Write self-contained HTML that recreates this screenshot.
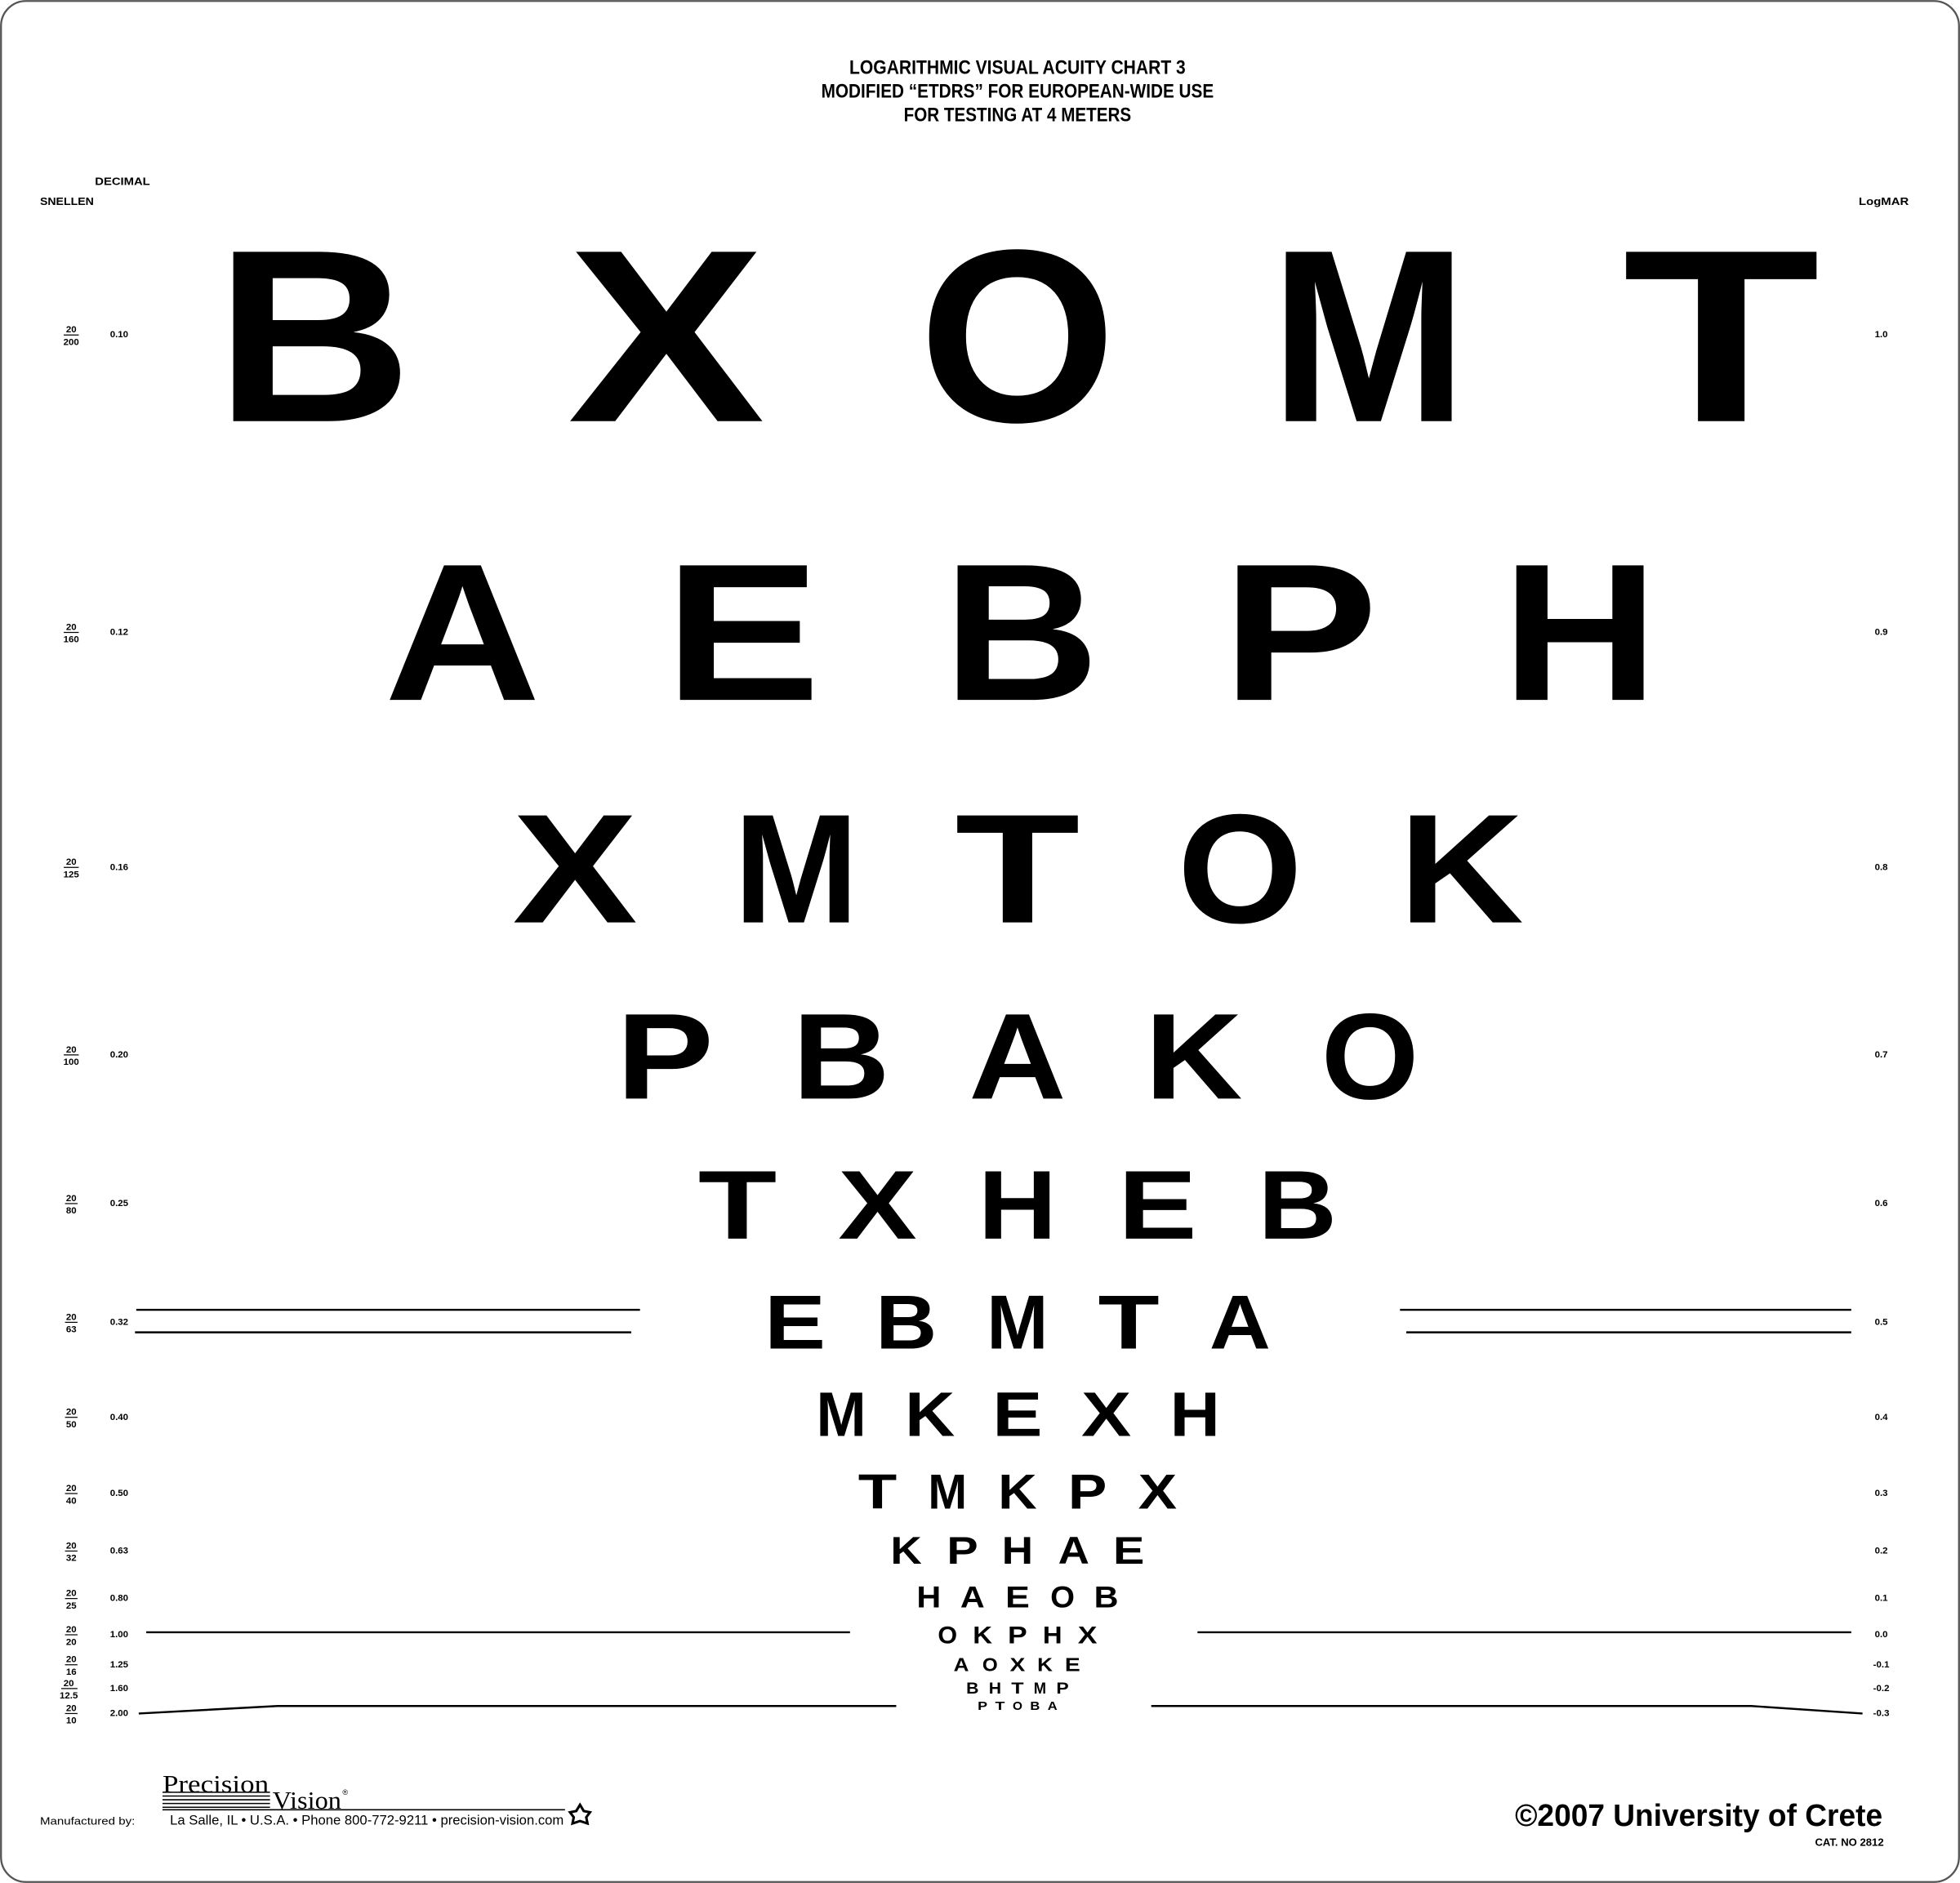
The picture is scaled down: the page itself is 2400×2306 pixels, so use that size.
<!DOCTYPE html>
<html><head><meta charset="utf-8"><style>
html,body{margin:0;padding:0;background:#fff;}
svg{display:block;}
.L{font-family:"Liberation Sans",sans-serif;font-weight:bold;text-anchor:middle;fill:#000;}
.s{font-family:"Liberation Sans Narrow","Liberation Sans",sans-serif;font-weight:bold;fill:#000;font-size:8.5px;}
.m{text-anchor:middle;}
.h{font-family:"Liberation Sans Narrow","Liberation Sans",sans-serif;font-weight:bold;fill:#000;text-anchor:middle;}
</style></head><body>
<svg width="2400" height="2306" viewBox="0 0 1568 1506.6" preserveAspectRatio="none" xmlns="http://www.w3.org/2000/svg">
<rect x="0.8" y="0.8" width="1566.4" height="1505" rx="20" ry="20" fill="#fff" stroke="#555" stroke-width="1.5"/>
<text class="h" x="814" y="59" font-size="16" textLength="269" lengthAdjust="spacingAndGlyphs">LOGARITHMIC VISUAL ACUITY CHART  3</text>
<text class="h" x="814" y="78" font-size="16" textLength="314" lengthAdjust="spacingAndGlyphs">MODIFIED “ETDRS” FOR EUROPEAN-WIDE USE</text>
<text class="h" x="814" y="97" font-size="16" textLength="182" lengthAdjust="spacingAndGlyphs">FOR TESTING AT 4 METERS</text>
<text class="s" x="76" y="148" font-size="11.5" textLength="44" lengthAdjust="spacingAndGlyphs">DECIMAL</text>
<text class="s" x="32" y="164" font-size="11.5" textLength="43" lengthAdjust="spacingAndGlyphs">SNELLEN</text>
<text class="s" x="1487" y="164" font-size="11.5" textLength="40" lengthAdjust="spacingAndGlyphs">LogMAR</text>

<g class="L" font-size="197" lengthAdjust="spacingAndGlyphs">
<text x="251" y="337" textLength="158" lengthAdjust="spacingAndGlyphs">B</text><text x="533" y="337" textLength="158" lengthAdjust="spacingAndGlyphs">X</text><text x="814" y="337" textLength="158" lengthAdjust="spacingAndGlyphs">O</text><text x="1095" y="337" textLength="158" lengthAdjust="spacingAndGlyphs">M</text><text x="1377" y="337" textLength="158" lengthAdjust="spacingAndGlyphs">T</text></g>
<g class="L" font-size="156.4">
<text x="370" y="560" textLength="125" lengthAdjust="spacingAndGlyphs">A</text><text x="594" y="560" textLength="125" lengthAdjust="spacingAndGlyphs">E</text><text x="817" y="560" textLength="125" lengthAdjust="spacingAndGlyphs">B</text><text x="1040" y="560" textLength="125" lengthAdjust="spacingAndGlyphs">P</text><text x="1264" y="560" textLength="125" lengthAdjust="spacingAndGlyphs">H</text></g>
<g class="L" font-size="124.3">
<text x="460" y="738" textLength="100" lengthAdjust="spacingAndGlyphs">X</text><text x="637" y="738" textLength="100" lengthAdjust="spacingAndGlyphs">M</text><text x="814" y="738" textLength="100" lengthAdjust="spacingAndGlyphs">T</text><text x="992" y="738" textLength="100" lengthAdjust="spacingAndGlyphs">O</text><text x="1169" y="738" textLength="100" lengthAdjust="spacingAndGlyphs">K</text></g>
<g class="L" font-size="97.8">
<text x="532" y="879" textLength="78" lengthAdjust="spacingAndGlyphs">P</text><text x="673" y="879" textLength="78" lengthAdjust="spacingAndGlyphs">B</text><text x="814" y="879" textLength="78" lengthAdjust="spacingAndGlyphs">A</text><text x="955" y="879" textLength="78" lengthAdjust="spacingAndGlyphs">K</text><text x="1096" y="879" textLength="78" lengthAdjust="spacingAndGlyphs">O</text></g>
<g class="L" font-size="78.2">
<text x="590" y="991" textLength="63" lengthAdjust="spacingAndGlyphs">T</text><text x="702" y="991" textLength="63" lengthAdjust="spacingAndGlyphs">X</text><text x="814" y="991" textLength="63" lengthAdjust="spacingAndGlyphs">H</text><text x="926" y="991" textLength="63" lengthAdjust="spacingAndGlyphs">E</text><text x="1038" y="991" textLength="63" lengthAdjust="spacingAndGlyphs">B</text></g>
<g class="L" font-size="61.5">
<text x="636" y="1079" textLength="49" lengthAdjust="spacingAndGlyphs">E</text><text x="725" y="1079" textLength="49" lengthAdjust="spacingAndGlyphs">B</text><text x="814" y="1079" textLength="49" lengthAdjust="spacingAndGlyphs">M</text><text x="903" y="1079" textLength="49" lengthAdjust="spacingAndGlyphs">T</text><text x="992" y="1079" textLength="49" lengthAdjust="spacingAndGlyphs">A</text></g>
<g class="L" font-size="50.3">
<text x="673" y="1149" textLength="40" lengthAdjust="spacingAndGlyphs">M</text><text x="744" y="1149" textLength="40" lengthAdjust="spacingAndGlyphs">K</text><text x="814" y="1149" textLength="40" lengthAdjust="spacingAndGlyphs">E</text><text x="885" y="1149" textLength="40" lengthAdjust="spacingAndGlyphs">X</text><text x="956" y="1149" textLength="40" lengthAdjust="spacingAndGlyphs">H</text></g>
<g class="L" font-size="39.1">
<text x="702" y="1207" textLength="31" lengthAdjust="spacingAndGlyphs">T</text><text x="758" y="1207" textLength="31" lengthAdjust="spacingAndGlyphs">M</text><text x="814" y="1207" textLength="31" lengthAdjust="spacingAndGlyphs">K</text><text x="870" y="1207" textLength="31" lengthAdjust="spacingAndGlyphs">P</text><text x="926" y="1207" textLength="31" lengthAdjust="spacingAndGlyphs">X</text></g>
<g class="L" font-size="30.7">
<text x="725" y="1251" textLength="25" lengthAdjust="spacingAndGlyphs">K</text><text x="770" y="1251" textLength="25" lengthAdjust="spacingAndGlyphs">P</text><text x="814" y="1251" textLength="25" lengthAdjust="spacingAndGlyphs">H</text><text x="859" y="1251" textLength="25" lengthAdjust="spacingAndGlyphs">A</text><text x="903" y="1251" textLength="25" lengthAdjust="spacingAndGlyphs">E</text></g>
<g class="L" font-size="24.4">
<text x="743" y="1286" textLength="19.5" lengthAdjust="spacingAndGlyphs">H</text><text x="778" y="1286" textLength="19.5" lengthAdjust="spacingAndGlyphs">A</text><text x="814" y="1286" textLength="19.5" lengthAdjust="spacingAndGlyphs">E</text><text x="850" y="1286" textLength="19.5" lengthAdjust="spacingAndGlyphs">O</text><text x="885" y="1286" textLength="19.5" lengthAdjust="spacingAndGlyphs">B</text></g>
<g class="L" font-size="19.6">
<text x="758" y="1315" textLength="15.5" lengthAdjust="spacingAndGlyphs">O</text><text x="786" y="1315" textLength="15.5" lengthAdjust="spacingAndGlyphs">K</text><text x="814" y="1315" textLength="15.5" lengthAdjust="spacingAndGlyphs">P</text><text x="842" y="1315" textLength="15.5" lengthAdjust="spacingAndGlyphs">H</text><text x="870" y="1315" textLength="15.5" lengthAdjust="spacingAndGlyphs">X</text></g>
<g class="L" font-size="15.4">
<text x="769" y="1337" textLength="12.3" lengthAdjust="spacingAndGlyphs">A</text><text x="792" y="1337" textLength="12.3" lengthAdjust="spacingAndGlyphs">O</text><text x="814" y="1337" textLength="12.3" lengthAdjust="spacingAndGlyphs">X</text><text x="836" y="1337" textLength="12.3" lengthAdjust="spacingAndGlyphs">K</text><text x="858" y="1337" textLength="12.3" lengthAdjust="spacingAndGlyphs">E</text></g>
<g class="L" font-size="12.6">
<text x="778" y="1355" textLength="10" lengthAdjust="spacingAndGlyphs">B</text><text x="796" y="1355" textLength="10" lengthAdjust="spacingAndGlyphs">H</text><text x="814" y="1355" textLength="10" lengthAdjust="spacingAndGlyphs">T</text><text x="832" y="1355" textLength="10" lengthAdjust="spacingAndGlyphs">M</text><text x="850" y="1355" textLength="10" lengthAdjust="spacingAndGlyphs">P</text></g>
<g class="L" font-size="9.8">
<text x="786" y="1368" textLength="7.8" lengthAdjust="spacingAndGlyphs">P</text><text x="800" y="1368" textLength="7.8" lengthAdjust="spacingAndGlyphs">T</text><text x="814" y="1368" textLength="7.8" lengthAdjust="spacingAndGlyphs">O</text><text x="828" y="1368" textLength="7.8" lengthAdjust="spacingAndGlyphs">B</text><text x="842" y="1368" textLength="7.8" lengthAdjust="spacingAndGlyphs">A</text></g>

<g stroke="#000" stroke-width="1.6" fill="none">
<line x1="109" y1="1048" x2="512" y2="1048"/><line x1="108" y1="1066" x2="505" y2="1066"/>
<line x1="1120" y1="1048" x2="1481" y2="1048"/><line x1="1125" y1="1066" x2="1481" y2="1066"/>
<line x1="117" y1="1306" x2="680" y2="1306"/><line x1="958" y1="1306" x2="1481" y2="1306"/>
<polyline points="111,1371 222,1365 717,1365"/><polyline points="921,1365 1401,1365 1490,1371"/>
</g>

<g class="s">
<g font-size="7.5" class="m">
<text x="57" y="266">20</text><text x="57" y="276">200</text>
<text x="57" y="504">20</text><text x="57" y="514">160</text>
<text x="57" y="692">20</text><text x="57" y="702">125</text>
<text x="57" y="842">20</text><text x="57" y="852">100</text>
<text x="57" y="961">20</text><text x="57" y="971">80</text>
<text x="57" y="1056">20</text><text x="57" y="1066">63</text>
<text x="57" y="1132">20</text><text x="57" y="1142">50</text>
<text x="57" y="1193">20</text><text x="57" y="1203">40</text>
<text x="57" y="1239">20</text><text x="57" y="1249">32</text>
<text x="57" y="1277">20</text><text x="57" y="1287">25</text>
<text x="57" y="1306">20</text><text x="57" y="1316">20</text>
<text x="57" y="1330">20</text><text x="57" y="1340">16</text>
<text x="55" y="1349">20</text><text x="55" y="1359">12.5</text>
<text x="57" y="1369">20</text><text x="57" y="1379">10</text>
</g>
<g stroke="#000" stroke-width="0.8">
<line x1="51" y1="268" x2="63" y2="268"/><line x1="51" y1="506" x2="63" y2="506"/><line x1="51" y1="694" x2="63" y2="694"/>
<line x1="51" y1="844" x2="63" y2="844"/><line x1="52" y1="963" x2="62" y2="963"/><line x1="52" y1="1058" x2="62" y2="1058"/>
<line x1="52" y1="1134" x2="62" y2="1134"/><line x1="52" y1="1195" x2="62" y2="1195"/><line x1="52" y1="1241" x2="62" y2="1241"/>
<line x1="52" y1="1279" x2="62" y2="1279"/><line x1="52" y1="1308" x2="62" y2="1308"/><line x1="52" y1="1332" x2="62" y2="1332"/>
<line x1="49" y1="1351" x2="62" y2="1351"/><line x1="52" y1="1371" x2="62" y2="1371"/>
</g>
<g font-size="7.5">
<text x="88" y="270">0.10</text><text x="88" y="508">0.12</text><text x="88" y="696">0.16</text><text x="88" y="846">0.20</text>
<text x="88" y="965">0.25</text><text x="88" y="1060">0.32</text><text x="88" y="1136">0.40</text><text x="88" y="1197">0.50</text>
<text x="88" y="1243">0.63</text><text x="88" y="1281">0.80</text><text x="88" y="1310">1.00</text><text x="88" y="1334">1.25</text>
<text x="88" y="1353">1.60</text><text x="88" y="1373">2.00</text>
</g>
<g font-size="7.5" class="m">
<text x="1505" y="270">1.0</text><text x="1505" y="508">0.9</text><text x="1505" y="696">0.8</text><text x="1505" y="846">0.7</text>
<text x="1505" y="965">0.6</text><text x="1505" y="1060">0.5</text><text x="1505" y="1136">0.4</text><text x="1505" y="1197">0.3</text>
<text x="1505" y="1243">0.2</text><text x="1505" y="1281">0.1</text><text x="1505" y="1310">0.0</text><text x="1505" y="1334">-0.1</text>
<text x="1505" y="1353">-0.2</text><text x="1505" y="1373">-0.3</text>
</g>
</g>

<text class="s" x="32" y="1460" font-size="10" textLength="76" lengthAdjust="spacingAndGlyphs" style="font-weight:normal">Manufactured by:</text>
<text x="130" y="1434" font-family="Liberation Serif,serif" font-size="20" textLength="85" lengthAdjust="spacingAndGlyphs">Precision</text>
<text x="218" y="1447" font-family="Liberation Serif,serif" font-size="20" textLength="55" lengthAdjust="spacingAndGlyphs">Vision</text>
<text x="274" y="1436" font-family="Liberation Sans,sans-serif" font-size="6">®</text>
<g stroke="#000" stroke-width="1">
<line x1="130" y1="1434" x2="216" y2="1434"/><line x1="130" y1="1437" x2="216" y2="1437"/><line x1="130" y1="1440" x2="216" y2="1440"/>
<line x1="130" y1="1443" x2="216" y2="1443"/><line x1="130" y1="1446" x2="216" y2="1446"/>
<line x1="130" y1="1448" x2="452" y2="1448"/>
</g>
<text x="136" y="1460" font-family="Liberation Sans Narrow,Liberation Sans,sans-serif" font-size="11" textLength="315" lengthAdjust="spacingAndGlyphs">La Salle, IL • U.S.A. • Phone 800-772-9211 • precision-vision.com</text>
<path d="M464,1444 L467,1449 L472,1450 L469,1454 L470,1459 L464,1457 L458,1459 L459,1454 L456,1450 L461,1449 Z" fill="none" stroke="#000" stroke-width="2"/>
<text x="1212" y="1461" font-family="Liberation Sans,sans-serif" font-weight="bold" font-size="25" textLength="294" lengthAdjust="spacingAndGlyphs">©2007 University of Crete</text>
<text x="1452" y="1477" class="s" font-size="8" textLength="55" lengthAdjust="spacingAndGlyphs">CAT. NO 2812</text>
</svg>
</body></html>
